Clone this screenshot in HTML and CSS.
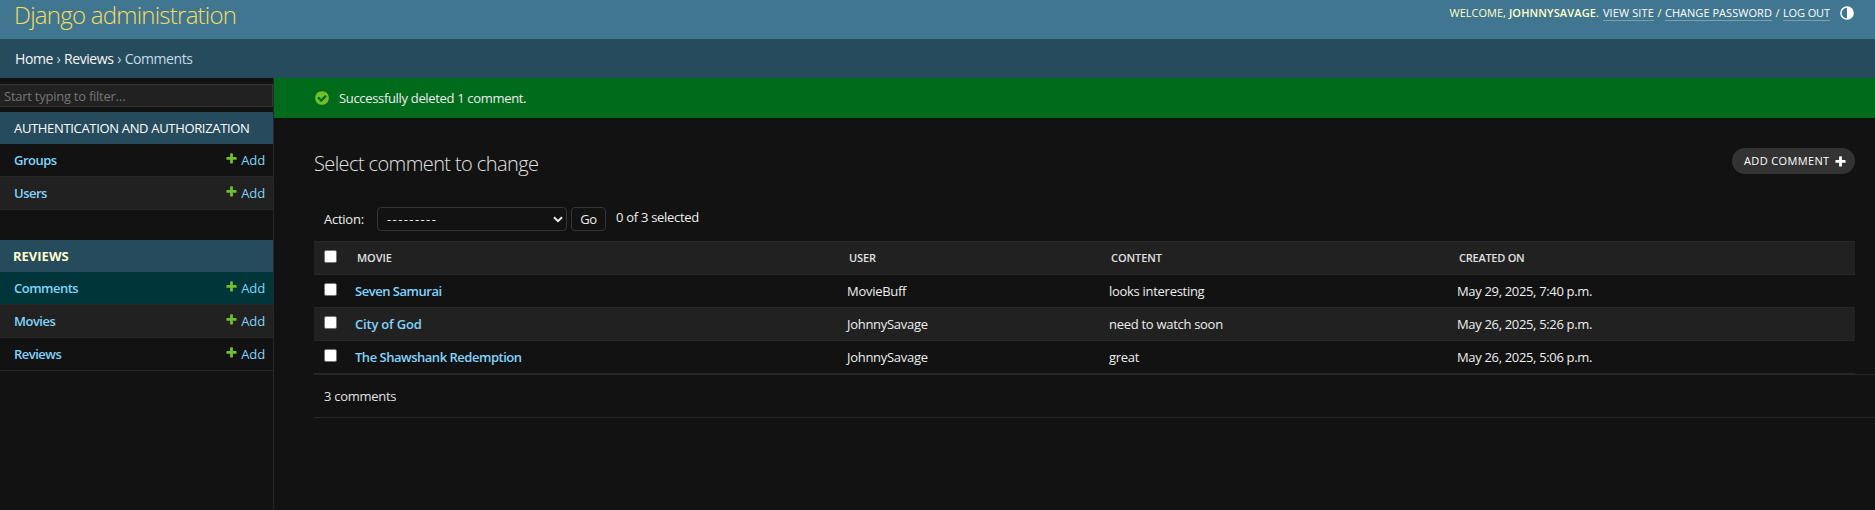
FILE: index.html
```html
<!DOCTYPE html>
<html lang="en">
<head>
<meta charset="utf-8">
<title>Select comment to change | Django site admin</title>
<link rel="stylesheet" href="styles.css">
</head>
<body>
<svg class="defs" width="0" height="0" aria-hidden="true">
  <symbol id="plus" viewBox="0 0 1792 1792"><path d="M1600 796v192q0 40-28 68t-68 28h-416v416q0 40-28 68t-68 28h-192q-40 0-68-28t-28-68v-416h-416q-40 0-68-28t-28-68v-192q0-40 28-68t68-28h416v-416q0-40 28-68t68-28h192q40 0 68 28t28 68v416h416q40 0 68 28t28 68z"/></symbol>
</svg>
<header class="header">
  <a class="brand">Django administration</a>
  <div class="user-tools">
    <span class="welcome">WELCOME,</span>
    <strong class="user">JOHNNYSAVAGE</strong><span class="dot">.</span>
    <a class="tool view">VIEW SITE</a><span class="slash">/</span><a class="tool">CHANGE PASSWORD</a><span class="slash">/</span><a class="tool logout">LOG OUT</a>
    <svg class="theme" viewBox="0 0 14 14"><circle cx="7" cy="7" r="6.1" fill="none" stroke="#fff" stroke-width="1.5"/><path d="M7 .8a6.2 6.2 0 0 1 0 12.4z" fill="#fff"/></svg>
  </div>
</header>
<nav class="breadcrumbs"><a>Home</a> › <a>Reviews</a> › Comments</nav>
<div class="main">
  <nav class="sidebar">
    <input class="filter" type="search" placeholder="Start typing to filter…">
    <section class="app">
      <h2 class="caption auth">AUTHENTICATION AND AUTHORIZATION</h2>
      <div class="model"><a class="name">Groups</a><a class="add"><svg class="plus"><use href="#plus"/></svg>Add</a></div>
      <div class="model alt"><a class="name">Users</a><a class="add"><svg class="plus"><use href="#plus"/></svg>Add</a></div>
    </section>
    <section class="app">
      <h2 class="caption current">REVIEWS</h2>
      <div class="model selected"><a class="name">Comments</a><a class="add"><svg class="plus"><use href="#plus"/></svg>Add</a></div>
      <div class="model alt"><a class="name">Movies</a><a class="add"><svg class="plus"><use href="#plus"/></svg>Add</a></div>
      <div class="model"><a class="name">Reviews</a><a class="add"><svg class="plus"><use href="#plus"/></svg>Add</a></div>
    </section>
  </nav>
  <main class="content">
    <div class="message">
      <svg class="tick" viewBox="0 0 1792 1792"><path fill="#70bf2b" d="M1412 734q0-28-18-46l-91-90q-19-19-45-19t-45 19l-408 407-226-226q-19-19-45-19t-45 19l-91 90q-18 18-18 46 0 27 18 45l362 362q19 19 45 19 27 0 46-19l543-543q18-18 18-45zm252 162q0 209-103 385.500t-279.500 279.500-385.500 103-385.500-103-279.500-279.500-103-385.500 103-385.500 279.500-279.500 385.500-103 385.500 103 279.500 279.500 103 385.500z"/></svg>
      <span>Successfully deleted 1 comment.</span>
    </div>
    <div class="title-row">
      <h1 class="title">Select comment to change</h1>
      <a class="add-button">ADD COMMENT<svg class="plus"><use href="#plus"/></svg></a>
    </div>
    <div class="actions">
      <label class="action-label">Action:</label>
      <div class="select"><span>---------</span><svg class="chevron" viewBox="0 0 10 7"><path d="M1 1.2l4 4 4-4" fill="none" stroke="#eee" stroke-width="2"/></svg></div>
      <button class="go">Go</button>
      <span class="counter">0 of 3 selected</span>
    </div>
    <div class="results">
      <div class="row head"><i class="check"></i><span class="c-movie">MOVIE</span><span>USER</span><span>CONTENT</span><span class="created">CREATED ON</span></div>
      <div class="row"><i class="check"></i><a class="link">Seven Samurai</a><span>MovieBuff</span><span>looks interesting</span><span class="date">May 29, 2025, 7:40 p.m.</span></div>
      <div class="row alt"><i class="check"></i><a class="link city">City of God</a><span>JohnnySavage</span><span>need to watch soon</span><span class="date">May 26, 2025, 5:26 p.m.</span></div>
      <div class="row"><i class="check"></i><a class="link">The Shawshank Redemption</a><span>JohnnySavage</span><span>great</span><span class="date">May 26, 2025, 5:06 p.m.</span></div>
    </div>
    <div class="paginator">3 comments</div>
  </main>
</div>
</body>
</html>
```
FILE: styles.css
```css
* { box-sizing: border-box; }
body {
  margin: 0;
  height: 510px;
  overflow: hidden;
  display: flex;
  flex-direction: column;
  background: #121212;
  color: #eee;
  font: 13px/18px "Open Sans", "Noto Sans", sans-serif;
  letter-spacing: -.29px;
}
h1, h2 { margin: 0; }
.defs { position: absolute; }
.plus { width: 13px; height: 13px; fill: #70bf2b; flex: none; }

.header {
  flex: none;
  display: flex;
  justify-content: space-between;
  height: 39px;
  padding: 0 21px 0 14px;
  background: #417690;
  color: #ffc;
}
.brand {
  height: 30px;
  margin-top: -2px;
  font-size: 24px;
  font-weight: 340;
  line-height: 33px;
  letter-spacing: -.76px;
  color: #f5dd5d;
}
.user-tools {
  display: flex;
  align-items: flex-start;
  padding-top: 5px;
  font-size: 11px;
  line-height: 15px;
  letter-spacing: 0;
}
.user { margin-left: 3px; font-weight: 600; letter-spacing: .13px; }
.dot { margin-right: 4px; }
.tool { height: 16px; border-bottom: 1px solid rgba(255,255,255,.3); color: #fff; letter-spacing: .04px; }
.view { letter-spacing: .11px; }
.logout { letter-spacing: -.1px; }
.slash { width: 11px; text-align: center; }
.theme { width: 14px; height: 14px; margin: 1px 0 0 10px; }

.breadcrumbs {
  flex: none;
  height: 39px;
  padding-left: 15px;
  background: #264b5d;
  color: #c4dce8;
  font-size: 14px;
  line-height: 40px;
  letter-spacing: -.43px;
  word-spacing: .5px;
}
.breadcrumbs a { color: #f7f7f7; }

.main { flex: 1; display: flex; min-height: 0; }
.sidebar { flex: none; width: 274px; border-right: 1px solid #272727; }
.filter {
  display: block;
  width: 274px;
  height: 23px;
  margin: 6px 0 5px -1px;
  padding: 0 4px;
  border: 1px solid #353535;
  background: #212121;
  font: inherit;
  letter-spacing: -.25px;
  outline: 0;
}
.filter::placeholder { color: #757575; opacity: 1; }
.app { margin-bottom: 30px; }
.caption {
  height: 32px;
  padding-left: 14px;
  background: #264b5d;
  color: #fff;
  font-size: 13px;
  font-weight: 400;
  line-height: 32px;
  letter-spacing: -.33px;
}
.current { padding-left: 13px; color: #ffc; font-weight: 700; letter-spacing: 0; }
.model {
  display: flex;
  justify-content: space-between;
  height: 33px;
  padding: 0 8px 0 14px;
  border-bottom: 1px solid #272727;
  line-height: 33px;
  color: #81d4fa;
}
.alt { background: #212121; }
.selected { background: #00363a; }
.name { font-weight: 600; letter-spacing: -.5px; }
.add { display: flex; letter-spacing: -.1px; }
.add .plus { margin: 8px 3px 0 0; }

.content { flex: 1; min-width: 0; }
.message {
  display: flex;
  align-items: center;
  height: 40px;
  padding-left: 40px;
  background: #006b1b;
  letter-spacing: -.33px;
}
.tick { width: 16px; height: 16px; margin-right: 9px; }
.title-row { display: flex; justify-content: space-between; padding: 30px 20px 0 40px; height: 89px; }
.title { font-size: 20px; font-weight: 340; line-height: 32px; letter-spacing: -.6px; color: #e0e0e0; }
.add-button {
  display: flex;
  width: 123px;
  height: 26px;
  padding-left: 12px;
  border-radius: 13px;
  background: #333;
  color: #fff;
  font-size: 11px;
  line-height: 26px;
  letter-spacing: .36px;
}
.add-button .plus { fill: #fff; margin: 7px 0 0 5px; }
.actions { display: flex; height: 34px; padding-left: 50px; }
.action-label { width: 53px; line-height: 24px; letter-spacing: -.25px; }
.select, .go { height: 24px; border: 1px solid #353535; border-radius: 4px; background: #121212; }
.select {
  display: flex;
  align-items: center;
  justify-content: space-between;
  width: 190px;
  padding: 0 3px 0 9px;
  letter-spacing: 1.4px;
}
.chevron { width: 10px; height: 7px; }
.go { width: 35px; margin: 0 10px 0 4px; padding: 0; color: #eee; font: inherit; letter-spacing: -.3px; }
.counter { line-height: 20px; }

.results { margin: 0 20px 0 40px; border-top: 1px solid #272727; }
.row {
  display: grid;
  grid-template-columns: 41px 492px 262px 348px 1fr;
  height: 33px;
  border-bottom: 1px solid #272727;
  line-height: 33px;
}
.check {
  width: 13px;
  height: 13px;
  margin: 8px 0 0 10px;
  border: 1px solid #767676;
  border-radius: 2px;
  background: #fff;
}
.head {
  background: #212121;
  color: #e0e0e0;
  font-size: 11px;
  font-weight: 600;
  line-height: 31px;
  letter-spacing: -.08px;
}
.head span { padding-left: 2px; }
.head .created { letter-spacing: -.25px; }
.link { color: #81d4fa; font-weight: 600; letter-spacing: -.48px; }
.city { letter-spacing: -.2px; }
.date { letter-spacing: -.34px; }
.paginator {
  height: 44px;
  margin-left: 40px;
  padding-left: 10px;
  border: solid #272727;
  border-width: 1px 0;
  line-height: 42px;
  color: #e0e0e0;
}
```
